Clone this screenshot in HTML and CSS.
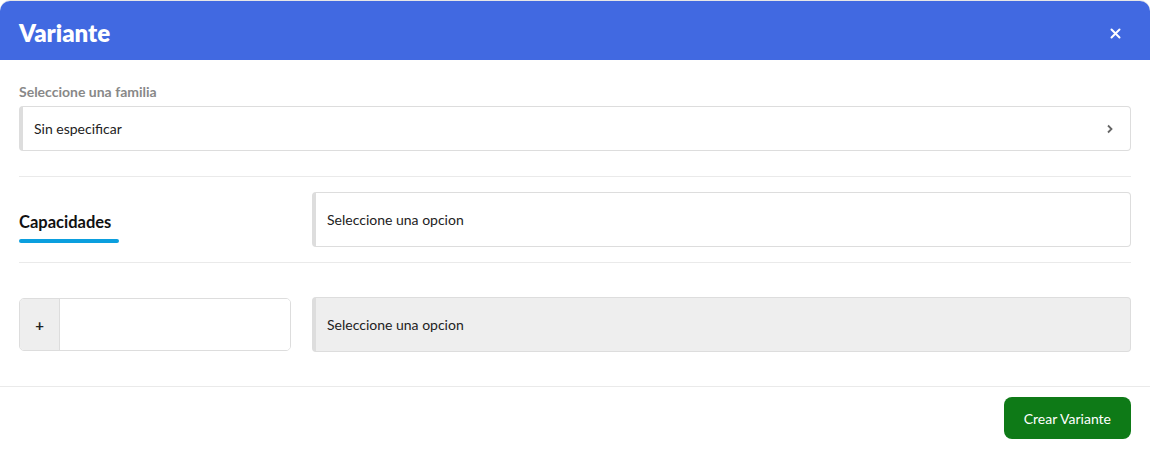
FILE: index.html
```html
<!DOCTYPE html>
<html lang="es">
<head>
<meta charset="utf-8">
<title>Variante</title>
<link rel="stylesheet" href="styles.css">
</head>
<body>
<div class="modal">
  <div class="modal-header">
    <h1 class="modal-title">Variante</h1>
    <button class="close" type="button" aria-label="Cerrar">
      <svg width="11" height="11" viewBox="0 0 11 11"><path d="M1.5 1.5 L9.5 9.5 M9.5 1.5 L1.5 9.5" stroke="#fff" stroke-width="2" stroke-linecap="round"/></svg>
    </button>
  </div>
  <div class="modal-body">
    <div class="field">
      <label class="label">Seleccione una familia</label>
      <div class="select select-family">
        <span>Sin especificar</span>
        <svg class="chev" width="8" height="10" viewBox="0 0 8 10"><path d="M2 1.5 L5.5 5 L2 8.5" fill="none" stroke="#666" stroke-width="1.8"/></svg>
      </div>
    </div>
    <hr class="sep">
    <div class="row">
      <div class="tab-col">
        <div class="tab">Capacidades</div>
      </div>
      <div class="select select-tall"><span>Seleccione una opcion</span></div>
    </div>
    <hr class="sep">
    <div class="row row-bottom">
      <div class="input-group">
        <span class="addon">+</span>
        <input class="input" type="text">
      </div>
      <div class="select select-tall disabled"><span>Seleccione una opcion</span></div>
    </div>
  </div>
  <div class="modal-footer">
    <button class="btn-create" type="button">Crear Variante</button>
  </div>
</div>
</body>
</html>
```

FILE: styles.css
```css
* { box-sizing: border-box; }
html, body { margin: 0; padding: 0; }
body {
  background: #fff;
  font-family: "Lato", "Noto Sans", sans-serif;
  color: #222;
  font-size: 14px;
}
.modal {
  width: 1150px;
  margin-top: 1px;
  background: #fff;
  border-radius: 10px 10px 0 0;
  overflow: hidden;
  box-shadow: 0 -1px 0 #e6e6e6;
}
.modal-header {
  height: 59px;
  background: #4169e1;
  display: flex;
  align-items: center;
  justify-content: space-between;
  padding: 3px 29px 0 19px;
}
.modal-title {
  margin: 0;
  color: #fff;
  font-size: 24px;
  font-weight: 800;
  letter-spacing: 0;
}
.close {
  background: none;
  border: 0;
  padding: 0;
  margin-top: 3px;
  display: flex;
  cursor: pointer;
}
.modal-body {
  padding: 24px 19px 34px 19px;
}
.label {
  display: block;
  color: #888;
  font-weight: 700;
  font-size: 14px;
  line-height: 16px;
  margin-bottom: 6px;
}
.select {
  display: flex;
  align-items: center;
  justify-content: space-between;
  border: 1px solid #ddd;
  border-left: 4px solid #ddd;
  border-radius: 4px;
  background: #fff;
  padding: 0 0 0 11px;
  color: #222;
  font-size: 14px;
}
.select-family {
  height: 45px;
  padding-right: 16px;
}
.chev { display: block; }
.sep {
  border: 0;
  border-top: 1px solid #eaeaea;
  margin: 25px 0 15px;
}
.row {
  display: flex;
  align-items: center;
  gap: 21px;
}
.tab-col {
  width: 272px;
  flex: none;
  align-self: stretch;
  display: flex;
  align-items: flex-end;
}
.tab {
  font-weight: 700;
  font-size: 16.5px;
  color: #111;
  line-height: 20px;
  padding: 0 0 5px;
  margin-bottom: -1px;
}
.tab::after {
  content: "";
  display: block;
  width: 100px;
  height: 4px;
  border-radius: 2px;
  background: #0b9fde;
  margin-top: 7px;
}
.select-tall {
  flex: 1;
  height: 55px;
}
.row + .sep { margin-top: 15px; margin-bottom: 34px; }
.disabled {
  background: #eee;
}
.input-group {
  width: 272px;
  flex: none;
  height: 53px;
  display: flex;
  border: 1px solid #ddd;
  border-radius: 5px;
  overflow: hidden;
}
.addon {
  width: 40px;
  background: #eee;
  border-right: 1px solid #ddd;
  display: flex;
  align-items: center;
  justify-content: center;
  font-weight: 700;
  font-size: 15px;
  color: #222;
}
.input {
  flex: 1;
  border: 0;
  outline: 0;
  min-width: 0;
}
.modal-footer {
  border-top: 1px solid #eaeaea;
  display: flex;
  justify-content: flex-end;
  padding: 10px 19px 10px;
}
.btn-create {
  background: #0e7a17;
  color: #fff;
  border: 0;
  border-radius: 8px;
  height: 42px;
  padding: 0 20px;
  font-family: "Lato", "Noto Sans", sans-serif;
  font-size: 14px;
}
```
